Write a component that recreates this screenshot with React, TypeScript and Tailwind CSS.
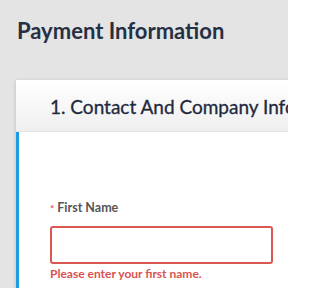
export default function App() {
  return (
    <div
      className="w-[288px] h-[288px] overflow-hidden bg-[#e4e4e4] pl-4"
      style={{ fontFamily: "Lato, 'Open Sans', sans-serif" }}
    >
      <h1 className="pt-[17px] pl-[1px] text-[22px] leading-[28px] font-bold text-[#263045] whitespace-nowrap">
        Payment Information
      </h1>
      <div className="mt-[35px] w-[400px] bg-white shadow-[0_1px_4px_rgba(0,0,0,0.18)]">
        <div className="h-[52px] flex items-center pl-[34px] pt-[3px] bg-gradient-to-b from-white to-[#efefef] border-b border-[#e2e2e2]">
          <h2 className="text-[19px] text-[#1f293d] whitespace-nowrap [-webkit-text-stroke:0.3px_#1f293d]">
            1. Contact And Company Information
          </h2>
        </div>
        <div className="border-l-[3px] border-[#1b9be0] pl-[31px] pt-[68px] h-[200px]">
          <label className="flex items-center gap-[3px] text-[12.5px] font-bold text-[#555] leading-[16px]">
            <span className="text-[#d9534f] text-[10px]">*</span>
            First Name
          </label>
          <input
            type="text"
            className="mt-[10px] block w-[223px] h-[38px] border-2 border-[#d9584f] rounded-[3px] outline-none"
          />
          <p className="mt-[2px] text-[12px] font-bold text-[#d9534f] leading-[16px]">
            Please enter your first name.
          </p>
        </div>
      </div>
    </div>
  );
}
